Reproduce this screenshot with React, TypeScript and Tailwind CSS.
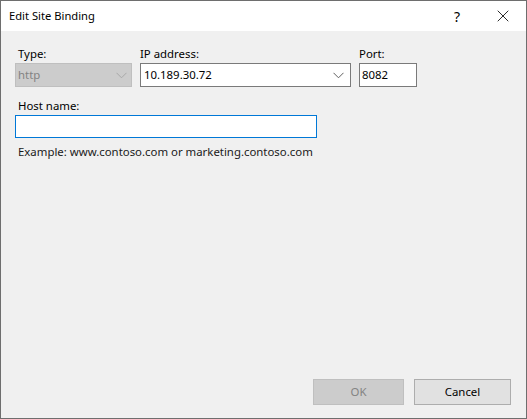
import { X } from "lucide-react";

function Chevron({ color }: { color: string }) {
  return (
    <svg width="11" height="7" viewBox="0 0 11 7" fill="none">
      <path d="M0.5 0.8 L5.5 5.8 L10.5 0.8" stroke={color} strokeWidth="1" />
    </svg>
  );
}

export default function App() {
  return (
    <div
      className="w-[527px] h-[419px] flex flex-col bg-[#f0f0f0] border-r border-b border-l border-[#6e6e6e] text-[11.4px] text-black"
      style={{ fontFamily: '"Noto Sans", "Open Sans", sans-serif' }}
    >
      {/* title bar */}
      <div className="h-[31px] bg-white flex items-center shrink-0 border-t border-[#6e6e6e]">
        <span className="pl-[8px] text-[11.2px] leading-none">Edit Site Binding</span>
        <div className="ml-auto flex items-center h-full">
          <span className="w-[46px] text-center text-[14px]">?</span>
          <div className="w-[46px] flex justify-center">
            <X size={20} strokeWidth={1} />
          </div>
        </div>
      </div>

      {/* body */}
      <div className="flex-1 flex flex-col px-[14px] pt-[14px]">
        <div className="flex gap-[8px]">
          <div className="flex flex-col w-[117px]">
            <label className="pl-[3px] h-[18px] leading-[18px]">Type:</label>
            <div className="h-[24px] bg-[#cccccc] border border-[#bfbfbf] flex items-center pl-[2px] pr-[4px] text-[#838383]">
              <span>http</span>
              <span className="ml-auto">
                <Chevron color="#a8a8a8" />
              </span>
            </div>
          </div>
          <div className="flex flex-col w-[211px]">
            <label className="h-[18px] leading-[18px]">IP address:</label>
            <div className="h-[24px] bg-white border border-[#7a7a7a] flex items-center pl-[3px] pr-[6px]">
              <span>10.189.30.72</span>
              <span className="ml-auto">
                <Chevron color="#606060" />
              </span>
            </div>
          </div>
          <div className="flex flex-col w-[58px]">
            <label className="h-[18px] leading-[18px]">Port:</label>
            <div className="h-[24px] bg-white border border-[#7a7a7a] flex items-center pl-[2px]">
              <span>8082</span>
            </div>
          </div>
        </div>

        <label className="mt-[10px] pl-[3px] h-[18px] leading-[18px]">Host name:</label>
        <div className="w-[302px] h-[23px] bg-white border border-[#0078d7]" />
        <p className="mt-[5px] pl-[3px] leading-[18px] text-[#1a1a1a]">
          Example: www.contoso.com or marketing.contoso.com
        </p>

        <div className="mt-auto mb-[13px] flex justify-end gap-[10px] pr-[1px]">
          <button className="w-[91px] h-[26px] bg-[#cccccc] border border-[#bfbfbf] text-[#838383]">
            OK
          </button>
          <button className="w-[97px] h-[26px] bg-[#e1e1e1] border border-[#adadad]">
            Cancel
          </button>
        </div>
      </div>
    </div>
  );
}
